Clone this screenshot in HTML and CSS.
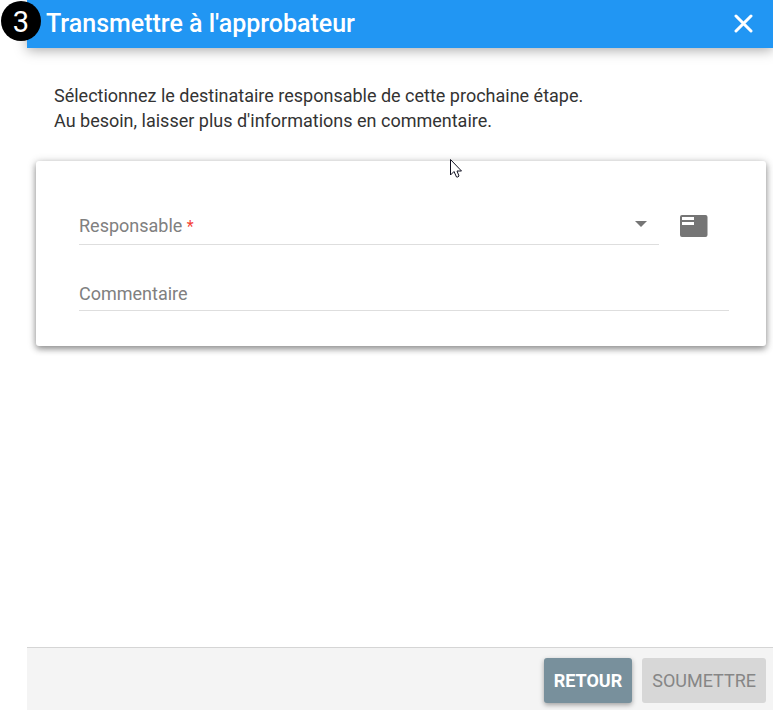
FILE: index.html
```html
<!DOCTYPE html>
<html lang="fr">
<head>
<meta charset="utf-8">
<title>Transmettre à l'approbateur</title>
<link rel="stylesheet" href="styles.css">
</head>
<body>
<span class="step">3</span>
<form class="dialog">
  <header class="dialog-header">
    <h1>Transmettre à l'approbateur</h1>
    <button class="close" type="button" aria-label="Fermer">
      <svg width="20" height="20" viewBox="0 0 20 20"><path d="M3 2L18 17M18 2L3 17" stroke="#fff" stroke-width="3" stroke-linecap="round" fill="none"/></svg>
    </button>
  </header>
  <main class="dialog-body">
    <p class="intro">Sélectionnez le destinataire responsable de cette prochaine étape.<br>Au besoin, laisser plus d'informations en commentaire.</p>
    <section class="card">
      <div class="row">
        <div class="field">
          <label for="responsable">Responsable <span class="required">*</span></label>
          <select id="responsable" required><option value=""></option></select>
          <svg class="arrow" width="12" height="6" viewBox="0 0 12 6"><path d="M0 0H12L6 6Z" fill="#757575"/></svg>
        </div>
        <button class="picker" type="button" aria-label="Choisir dans la liste">
          <svg width="28" height="22" viewBox="0 0 28 22"><path fill-rule="evenodd" fill="#757575" d="M2 0H25.500Q27.500 0 27.500 2V20Q27.500 22 25.500 22H2Q0 22 0 20V2Q0 0 2 0ZM2 2V5H14V2ZM2 7V10H14V7Z"/></svg>
        </button>
      </div>
      <div class="field comment">
        <label for="commentaire">Commentaire</label>
        <input id="commentaire" type="text">
      </div>
    </section>
  </main>
  <footer class="dialog-footer">
    <button class="btn back" type="button">RETOUR</button>
    <button class="btn submit" type="submit" disabled>SOUMETTRE</button>
  </footer>
</form>
<svg class="cursor" width="14" height="21" viewBox="0 0 14 21"><path d="M1.500 1.500V17L5 13.500L7.500 19Q9 19.500 10 18L8 13H12.500Z" fill="#fff" stroke="#101020" stroke-width="1"/></svg>
</body>
</html>
```
FILE: styles.css
```css
* {
  box-sizing: border-box;
}

body {
  margin: 0;
  padding-left: 27px;
  background: #fff;
  color: #333;
  font: 18px/25px Roboto, "Liberation Sans", sans-serif;
}

button,
select,
input {
  margin: 0;
  padding: 0;
  border: 0;
  background: none;
  font: inherit;
}

svg {
  display: block;
}

.dialog {
  display: flex;
  flex-direction: column;
  min-height: 100vh;
}

.dialog-header {
  display: flex;
  align-items: center;
  justify-content: space-between;
  height: 48px;
  padding: 0 20px 1px 19px;
  background: #2196f3;
  box-shadow: 0 2px 12px rgba(0, 0, 0, 0.35);
}

h1 {
  margin: 0;
  color: #fff;
  font-size: 25px;
  font-weight: 500;
  line-height: 32px;
}

.step {
  position: absolute;
  top: 1px;
  left: 1px;
  width: 40px;
  height: 40px;
  border-radius: 50%;
  background: #000;
  color: #fff;
  font-size: 29px;
  line-height: 42px;
  text-align: center;
}

.dialog-body {
  flex: 1;
  padding: 35px 7px 0 9px;
}

.intro {
  margin: 0 18px 28px;
}

.card {
  padding: 46px 37px 35px 43px;
  border-radius: 3px;
  background: #fff;
  box-shadow: 0 3px 6px rgba(0, 0, 0, 0.35), 0 1px 10px rgba(0, 0, 0, 0.2);
}

.row {
  display: flex;
  align-items: center;
  gap: 21px;
  padding-right: 21px;
}

.field {
  display: grid;
  flex: 1;
  align-items: center;
  height: 38px;
  border-bottom: 1px solid #dedede;
}

.field > * {
  grid-area: 1 / 1;
}

.field label {
  color: #808080;
  pointer-events: none;
}

.field select,
.field input {
  width: 100%;
  height: 100%;
  appearance: none;
  outline: 0;
}

.comment {
  height: 34px;
  margin-top: 32px;
}

.required {
  color: #f44336;
  font-size: 16px;
}

.arrow {
  justify-self: end;
  margin: 0 12px 4px 0;
  pointer-events: none;
}

.dialog-footer {
  display: flex;
  justify-content: flex-end;
  gap: 10px;
  padding: 10px 7px 7px;
  border-top: 1px solid #d5d5d5;
  background: #f4f4f4;
}

.btn {
  height: 45px;
  padding: 0 10px;
  border-radius: 3px;
}

.back {
  background: #78909c;
  box-shadow: 0 2px 5px rgba(0, 0, 0, 0.35);
  color: #fff;
  font-weight: 700;
}

.submit {
  background: #d7d7d7;
  color: #868686;
}

.cursor {
  position: absolute;
  top: 158px;
  left: 449px;
}
```
